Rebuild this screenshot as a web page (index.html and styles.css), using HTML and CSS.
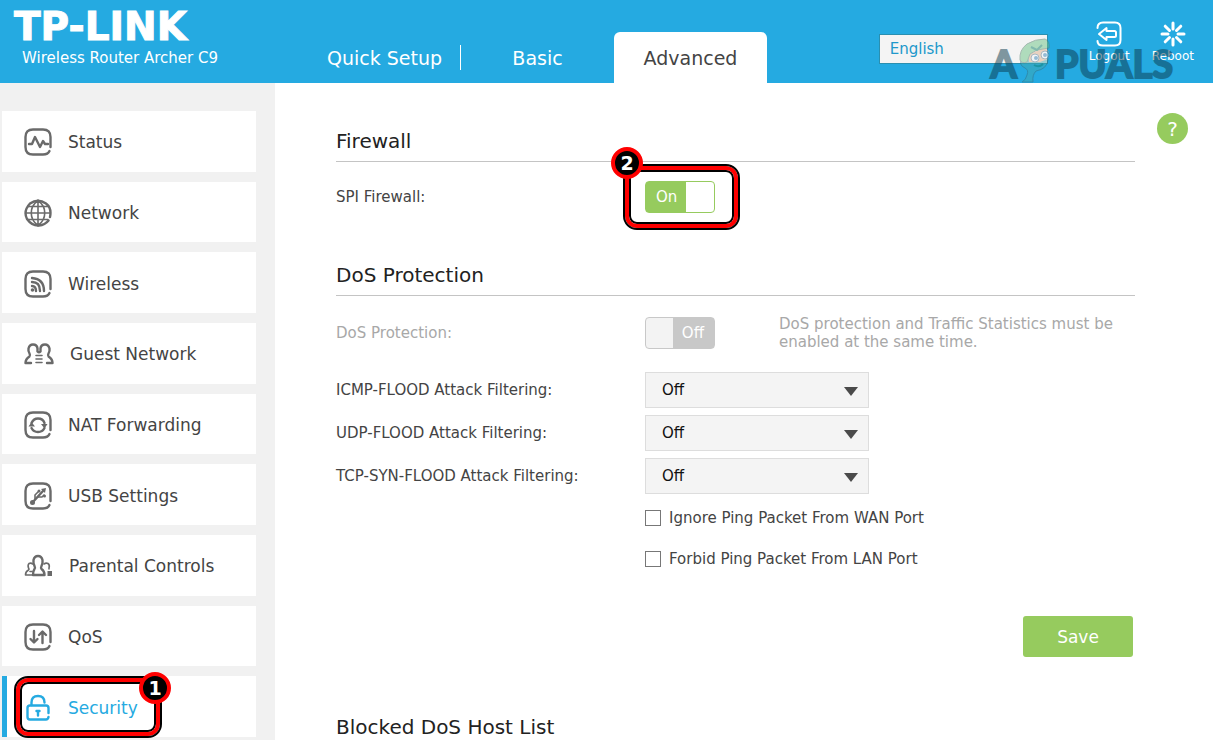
FILE: index.html
```html
<!DOCTYPE html>
<html lang="en">
    <head>
        <meta charset="UTF-8">
        <meta name="viewport" content="width=device-width, initial-scale=1.0">
        <title>TP-LINK</title>
        <link rel="stylesheet" href="styles.css">
    </head>

    <body>
        <header class="header">
            <div class="brand">
                <div class="logo">TP-LINK</div>
                <div class="model">Wireless Router Archer C9</div>
            </div>
            <nav class="tabs">
                <a class="tab tab-line" href="#">Quick Setup</a>
                <a class="tab" href="#">Basic</a>
                <a class="tab tab-active" href="#">Advanced</a>
            </nav>
            <div class="tools">
                <select class="language" aria-label="Language">
                    <option>English</option>
                </select>
                <a class="tool" href="#">
                    <svg width="26" height="26" viewBox="0 0 26 26" fill="none" stroke="#fff" stroke-width="2" stroke-linecap="round" stroke-linejoin="round">
                        <path d="M1.500 7Q1.500 1.500 7 1.500H19Q24.500 1.500 24.500 7V19Q24.500 24.500 19 24.500H7Q1.500 24.500 1.500 20"/>
                        <path d="M3 13L10.500 7V10H18.500Q20 10 20 11.500V14.500Q20 16 18.500 16H10.500V19Z"/>
                    </svg>
                    Logout
                </a>
                <a class="tool" href="#">
                    <svg width="26" height="26" viewBox="0 0 26 26" fill="none" stroke="#fff" stroke-width="3" stroke-linecap="round">
                        <path d="M13 2V8M13 18V24M2 13H8M18 13H24M5.200 5.200L9.500 9.500M16.500 16.500L20.800 20.800M20.800 5.200L16.500 9.500M9.500 16.500L5.200 20.800"/>
                    </svg>
                    Reboot
                </a>
            </div>
            <div class="watermark">
                <span>A</span>
                <svg width="34" height="45" viewBox="0 0 34 45">
                    <path d="M5 20Q1 27 8 30Q12 32 10 37Q9 42 5 44H16Q15 37 19 33Q30 31 31 22L30 12L12 17Z" fill="#3fa7b0" stroke="#37707c"/>
                    <path d="M11 17L28 9L32 14L31 21L23 24H12Z" fill="#e0b08c"/>
                    <path d="M3 22Q2 12 10 6Q18 1 28 1Q33 3 32 10L20 12L13 16L10 24Q5 26 3 22Z" fill="#6cc485" stroke="#56806f"/>
                    <circle cx="18" cy="20" r="4" fill="#f0f4f8" stroke="#5a7d92"/>
                    <circle cx="28" cy="17" r="4" fill="#f0f4f8" stroke="#5a7d92"/>
                    <circle cx="19" cy="20" r="2" fill="#3b84b8"/>
                    <circle cx="28" cy="17" r="2" fill="#3b84b8"/>
                    <path d="M14 9L20 12L25 7M17 27Q22 30 26 26" fill="none" stroke="#12806a" stroke-width="2"/>
                </svg>
                <span>PUALS</span>
            </div>
        </header>

        <div class="page">
            <ul class="menu">
                <li class="menu-item">
                    <a href="#">
                        <svg width="28" height="28" viewBox="0 0 28 28">
                            <path d="M26.500 19V9Q26.500 1.500 19 1.500H9Q1.500 1.500 1.500 9V19Q1.500 26.500 9 26.500H19Q24 26.500 25.500 23"/>
                            <path d="M5 16H8L11 9L16 19L19 13L21 16H24"/>
                        </svg>
                        Status
                    </a>
                </li>
                <li class="menu-item">
                    <a href="#">
                        <svg width="28" height="28" viewBox="0 0 28 28">
                            <path d="M26 18Q28 9 22 4.500Q14 -1 6 4.500Q-1 12 3 20Q8 27 15 26.500Q21 26 24.500 21.500"/>
                            <path class="thin" d="M14 1V27M2 14H26M4 7.500H24M4 20.500H24M14 1.500C5 8 5 20 14 26.500M14 1.500C23 8 23 20 14 26.500"/>
                        </svg>
                        Network
                    </a>
                </li>
                <li class="menu-item">
                    <a href="#">
                        <svg width="28" height="28" viewBox="0 0 28 28">
                            <path d="M26.500 19V9Q26.500 1.500 19 1.500H9Q1.500 1.500 1.500 9V19Q1.500 26.500 9 26.500H19Q24 26.500 25.500 23"/>
                            <path d="M8 16Q12 16 12 21M8 12Q16 12 16 21M8 8Q20 9 20 21"/>
                            <circle class="solid" cx="8.500" cy="20" r="1.800"/>
                        </svg>
                        Wireless
                    </a>
                </li>
                <li class="menu-item">
                    <a href="#">
                        <svg width="30" height="28" viewBox="0 0 30 28">
                            <path d="M7 23H1.500Q1.500 19 5.500 16.500Q6.500 15.500 5.500 13.500Q4 11 4.500 8.500Q5.500 4.500 9 4.500Q13 4.500 13.500 8.500V11.500Q15 13 16.500 11.500V8.500Q17 4.500 21 4.500Q24.500 4.500 25.500 8.500Q26 11 24.500 13.500Q23.500 15.500 24.500 16.500Q28.500 19 28.500 23H23"/>
                            <path class="thin" d="M12 15.500H18M12 19H18M12 22.500H18"/>
                        </svg>
                        Guest Network
                    </a>
                </li>
                <li class="menu-item">
                    <a href="#">
                        <svg width="28" height="28" viewBox="0 0 28 28">
                            <path d="M26.500 19V9Q26.500 1.500 19 1.500H9Q1.500 1.500 1.500 9V19Q1.500 26.500 9 26.500H19Q24 26.500 25.500 23"/>
                            <path d="M7.500 12Q9.500 7.500 14 7.500Q19 7.500 20.500 12M20.500 17Q18.500 21 14 21Q9.500 21 7.500 17"/>
                            <path class="solid" d="M4.500 15.500L7.500 11L11 15.500ZM17 13H23.500L20.500 17.500Z"/>
                        </svg>
                        NAT Forwarding
                    </a>
                </li>
                <li class="menu-item">
                    <a href="#">
                        <svg width="28" height="28" viewBox="0 0 28 28">
                            <path d="M26.500 19V9Q26.500 1.500 19 1.500H9Q1.500 1.500 1.500 9V19Q1.500 26.500 9 26.500H19Q24 26.500 25.500 23"/>
                            <path d="M8 21L19 9"/>
                            <path class="thin" d="M11 17V13L15 9M14 15H18L20 13"/>
                            <path class="solid" d="M17 7L22 6L21 11Z"/>
                            <circle class="solid" cx="8.500" cy="20.500" r="2.500"/>
                            <circle class="solid" cx="15" cy="9" r="1.500"/>
                            <circle class="solid" cx="20.500" cy="14" r="1.500"/>
                        </svg>
                        USB Settings
                    </a>
                </li>
                <li class="menu-item">
                    <a href="#">
                        <svg width="29" height="28" viewBox="0 0 29 28">
                            <path d="M9 23H20.500Q20.500 19 17.500 17Q16.500 16 17.500 14Q19 11 18.500 8Q17.500 4 14 4Q10.500 4 9.500 8Q9 11 10.500 14Q11.500 16 10.500 17Q9 19 9 23"/>
                            <path class="thin" d="M9 23H1.500Q1.500 19.500 4.500 18Q5.500 17.500 4.500 16Q3.500 13 5 11.500Q7 10.500 8.500 12M20 12Q22 10.500 24 11.500Q26 13 25 16V17M6 19.500H8"/>
                            <path class="solid" d="M23.500 19H28V24H23.500Z"/>
                        </svg>
                        Parental Controls
                    </a>
                </li>
                <li class="menu-item">
                    <a href="#">
                        <svg width="28" height="28" viewBox="0 0 28 28">
                            <path d="M26.500 19V9Q26.500 1.500 19 1.500H9Q1.500 1.500 1.500 9V19Q1.500 26.500 9 26.500H19Q24 26.500 25.500 23"/>
                            <path d="M10 8V19M6.500 16L10 19.500L13.500 16M18.500 20V9M15 12L18.500 8.500L22 12"/>
                        </svg>
                        QoS
                    </a>
                </li>
                <li class="menu-item menu-active">
                    <a href="#">
                        <svg width="28" height="28" viewBox="0 0 28 28">
                            <path d="M24.500 19V14Q24.500 11.500 22 11.500H6Q3.500 11.500 3.500 14V23Q3.500 25.500 6 25.500H22Q24 25.500 24.500 23"/>
                            <path d="M7.500 11V8.500Q7.500 2 14 2Q20.500 2 20.500 8.500M14 17V21.500M12.500 17H15.500"/>
                        </svg>
                        Security
                    </a>
                    <div class="mark mark-menu"><b class="mark-number">1</b></div>
                </li>
            </ul>

            <main class="main">
                <form class="content">
                    <h2 class="title">Firewall</h2>
                    <div class="row">
                        <label for="spi">SPI Firewall:</label>
                        <div class="field">
                            <button id="spi" class="switch switch-on" type="button">On</button>
                            <div class="mark mark-switch"><b class="mark-number">2</b></div>
                        </div>
                    </div>

                    <h2 class="title title-next">DoS Protection</h2>
                    <div class="row row-disabled">
                        <label for="dos">DoS Protection:</label>
                        <div class="field">
                            <button id="dos" class="switch switch-off" type="button" disabled>Off</button>
                            <p class="note">DoS protection and Traffic Statistics must be enabled at the same time.</p>
                        </div>
                    </div>
                    <div class="filters">
                        <div class="row">
                            <label for="icmp">ICMP-FLOOD Attack Filtering:</label>
                            <div class="field drop"><select id="icmp"><option>Off</option></select></div>
                        </div>
                        <div class="row">
                            <label for="udp">UDP-FLOOD Attack Filtering:</label>
                            <div class="field drop"><select id="udp"><option>Off</option></select></div>
                        </div>
                        <div class="row">
                            <label for="tcp">TCP-SYN-FLOOD Attack Filtering:</label>
                            <div class="field drop"><select id="tcp"><option>Off</option></select></div>
                        </div>
                        <label class="check"><input type="checkbox"> Ignore Ping Packet From WAN Port</label>
                        <label class="check"><input type="checkbox"> Forbid Ping Packet From LAN Port</label>
                    </div>
                    <button class="save" type="button">Save</button>

                    <h2 class="title-last">Blocked DoS Host List</h2>
                </form>
                <button class="help" type="button" aria-label="Help">?</button>
            </main>
        </div>
    </body>
</html>
```

FILE: styles.css
```css
* {
    box-sizing: border-box;
}
body {
    margin: 0;
    background-color: white;
    color: #444;
    font-family: "DejaVu Sans", Verdana, sans-serif;
    font-size: 15px;
}
a {
    color: inherit;
    text-decoration: none;
}
h2, p, ul {
    margin: 0;
    padding: 0;
    font-weight: normal;
}
button, select, input {
    font-family: inherit;
    margin: 0;
}

/* header */
.header {
    position: relative;
    display: flex;
    height: 83px;
    background-color: #25aae1;
    color: white;
}
.brand {
    width: 308px;
    padding: 8px 0 0 14px;
}
.logo {
    font-size: 39px;
    line-height: 38px;
    font-weight: bold;
    -webkit-text-stroke: 1px white;
}
.model {
    padding-left: 8px;
    font-size: 15px;
    line-height: 24px;
}
.tabs {
    display: flex;
    align-items: flex-end;
}
.tab {
    width: 153px;
    height: 51px;
    line-height: 52px;
    font-size: 19px;
    text-align: center;
    border-radius: 6px 6px 0 0;
}
.tab-line {
    position: relative;
}
.tab-line::after {
    content: "";
    position: absolute;
    right: 0;
    top: 13px;
    height: 25px;
    border-right: 1px solid white;
}
.tab-active {
    background-color: white;
    color: #444;
}
.tools {
    display: flex;
    align-items: flex-start;
    margin-left: auto;
    padding-right: 19px;
}
.language {
    appearance: none;
    width: 169px;
    height: 30px;
    margin: 34px 41px 0 0;
    padding: 0 10px;
    border: 1px solid #2a8fb0;
    border-radius: 0;
    background-color: #f4f4f4;
    color: #2098cb;
    font-size: 15px;
}
.tool {
    display: flex;
    flex-direction: column;
    align-items: center;
    margin-top: 21px;
    font-size: 12px;
    line-height: 18px;
}
.tool + .tool {
    margin-left: 22px;
}
.watermark {
    position: absolute;
    right: 40px;
    top: 38px;
    display: flex;
    align-items: flex-end;
    color: #0b3a4d;
    font-family: Lato, sans-serif;
    font-size: 38px;
    line-height: 50px;
    font-weight: bold;
    opacity: 0.5;
    -webkit-text-stroke: 2px #0b3a4d;
    stroke-linejoin: round;
    pointer-events: none;
}
.watermark svg {
    margin: 0 4px 5px 0;
}

/* left menu */
.page {
    display: flex;
}
.menu {
    display: grid;
    grid-auto-rows: 1fr;
    gap: 10px;
    width: 275px;
    padding: 28px 19px 3px 2px;
    background-color: #f1f1f1;
    list-style: none;
}
.menu-item {
    position: relative;
    background-color: white;
    font-size: 17px;
}
.menu-item a {
    display: flex;
    align-items: center;
    gap: 16px;
    height: 100%;
    padding: 2px 0 0 22px;
}
.menu-item svg {
    fill: none;
    stroke: #6a6a6a;
    stroke-width: 2.4;
    stroke-linecap: round;
    stroke-linejoin: round;
}
.menu-item .thin {
    stroke-width: 1.6;
}
.menu-item .solid {
    fill: #6a6a6a;
    stroke: none;
}
.menu-active {
    border-left: 5px solid #25aae1;
    color: #25aae1;
}
.menu-active a {
    padding-left: 17px;
}
.menu-active svg {
    stroke: #25aae1;
}

/* content */
.main {
    display: flex;
    flex: 1;
    justify-content: space-between;
    gap: 22px;
    padding: 46px 25px 1px 61px;
}
.content {
    flex: 1;
}
.title {
    padding-bottom: 8px;
    margin-bottom: 19px;
    border-bottom: 1px solid #c4c4c4;
}
.title, .title-last {
    color: #222;
    font-size: 20px;
    line-height: 24px;
}
.title-next {
    margin-top: 50px;
}
.title-last {
    margin-top: 58px;
}
.row {
    display: grid;
    grid-template-columns: 309px 1fr;
    align-items: center;
}
.row-disabled {
    color: #a8a8a8;
}
.field {
    position: relative;
    display: flex;
    align-items: center;
}
.switch {
    width: 70px;
    height: 32px;
    padding: 0 10px;
    border: 1px solid #96cb5e;
    border-radius: 4px;
    color: white;
    font-size: 15px;
}
.switch-on {
    background: linear-gradient(to right, #96cb5e 40px, white 40px);
    text-align: left;
}
.switch-off {
    border-color: #c8c8c8;
    background: linear-gradient(to right, #f3f3f3 27px, #c8c8c8 27px);
    text-align: right;
}
.note {
    max-width: 340px;
    margin-left: 64px;
    line-height: 18px;
}
.filters {
    display: grid;
    gap: 7px;
    margin-top: 21px;
}
.drop {
    width: 224px;
}
.drop select {
    appearance: none;
    width: 100%;
    height: 36px;
    padding: 0 16px;
    border: 1px solid #ddd;
    border-radius: 0;
    background-color: #f4f4f4;
    color: #111;
    font-size: 15px;
}
.drop::after {
    content: "";
    position: absolute;
    right: 11px;
    top: 15px;
    border: 7px solid transparent;
    border-top: 9px solid #4a4a4a;
    border-bottom: 0;
    pointer-events: none;
}
.check {
    display: flex;
    align-items: center;
    gap: 8px;
    height: 34px;
    padding-left: 309px;
}
.check input {
    appearance: none;
    width: 16px;
    height: 16px;
    border: 1px solid #777;
    background-color: white;
}
.save {
    display: block;
    width: 110px;
    height: 41px;
    margin: 40px 2px 0 auto;
    border: 0;
    border-radius: 3px;
    background-color: #96cb5e;
    color: white;
    font-size: 17px;
}
.help {
    width: 31px;
    height: 31px;
    margin-top: -16px;
    padding: 0;
    border: 0;
    border-radius: 50%;
    background-color: #96cb5e;
    color: white;
    font-size: 20px;
}

/* red callouts */
.mark {
    position: absolute;
    border: 4px solid #f00;
    border-radius: 12px;
    outline: 2px solid black;
    box-shadow: inset 0 0 0 2px black;
    pointer-events: none;
}
.mark-menu {
    left: 9px;
    top: 2px;
    width: 144px;
    height: 58px;
}
.mark-switch {
    left: -20px;
    top: -15px;
    width: 113px;
    height: 62px;
}
.mark-number {
    position: absolute;
    width: 32px;
    height: 32px;
    border: 4px solid #f00;
    border-radius: 50%;
    background-color: black;
    color: white;
    font-size: 19px;
    line-height: 24px;
    text-align: center;
}
.mark-menu .mark-number {
    right: -15px;
    top: -10px;
}
.mark-switch .mark-number {
    left: -18px;
    top: -23px;
}
```
